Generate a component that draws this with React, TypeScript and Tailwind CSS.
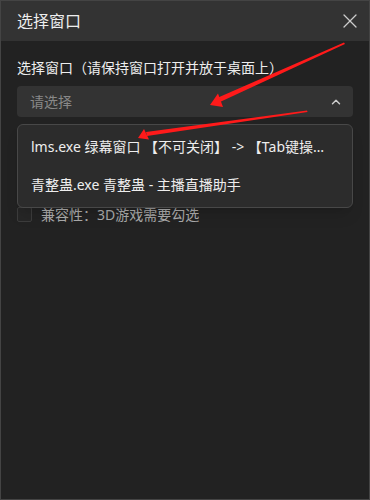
import { X, ChevronUp } from "lucide-react";

const font = { fontFamily: '"Noto Sans", "Noto Sans CJK SC", sans-serif' };

function Arrows() {
  return (
    <svg className="pointer-events-none absolute inset-0 z-20" width="370" height="500" viewBox="0 0 370 500">
      {/* 箭头1：指向下拉框 */}
      <polygon points="343,41.5 344,43 219,101 216,97" fill="#ff1a1a" />
      <polygon points="209,104 217,92.5 222,106" fill="#ff1a1a" />
      {/* 箭头2：指向第一项 */}
      <polygon points="306,109.5 306.5,111 146,135 145,131" fill="#ff1a1a" />
      <polygon points="137,137 143,128 148,138.5" fill="#ff1a1a" />
    </svg>
  );
}

export default function App() {
  return (
    <div className="relative h-[500px] w-[370px] overflow-hidden border border-[#444] bg-[#222]" style={font}>
      <div className="flex h-[40px] items-center justify-between bg-[#333] pl-[16px] pr-[7px]">
        <span className="text-[16px] text-[#eee]">选择窗口</span>
        <X size={24} strokeWidth={1.3} className="text-[#ccc]" />
      </div>

      <div className="px-[16px] pt-[16px]">
        <div className="text-[14px] leading-[22px] text-[#eee]">选择窗口（请保持窗口打开并放于桌面上）</div>

        <div className="mt-[7px] flex h-[31px] items-center justify-between rounded-[4px] bg-[#333] pl-[13px] pr-[10px]">
          <span className="text-[14px] text-[#888]">请选择</span>
          <ChevronUp size={14} strokeWidth={2.5} className="text-[#ccc]" />
        </div>

        <div className="relative">
          <div className="absolute left-0 right-0 top-[7px] z-10 rounded-[6px] border border-[#484848] bg-[#2c2c2c] py-[6px] shadow-lg">
            <div className="truncate py-[6px] pl-[13px] pr-[20px] text-[14px] leading-[20px] text-[#eee]">
              lms.exe 绿幕窗口 【不可关闭】 -&gt; 【Tab键操作快捷窗口】
            </div>
            <div className="truncate py-[6px] pl-[13px] pr-[20px] pt-[12px] text-[14px] leading-[20px] text-[#eee]">
              青整蛊.exe 青整蛊 - 主播直播助手
            </div>
          </div>

          <div className="flex items-center gap-[9px] pt-[87px]">
            <div className="h-[15px] w-[15px] rounded-[2px] border border-[#3c3c3c] bg-[#262626]" />
            <span className="text-[14px] text-[#aaa]">兼容性：3D游戏需要勾选</span>
          </div>
        </div>
      </div>

      <Arrows />
    </div>
  );
}
